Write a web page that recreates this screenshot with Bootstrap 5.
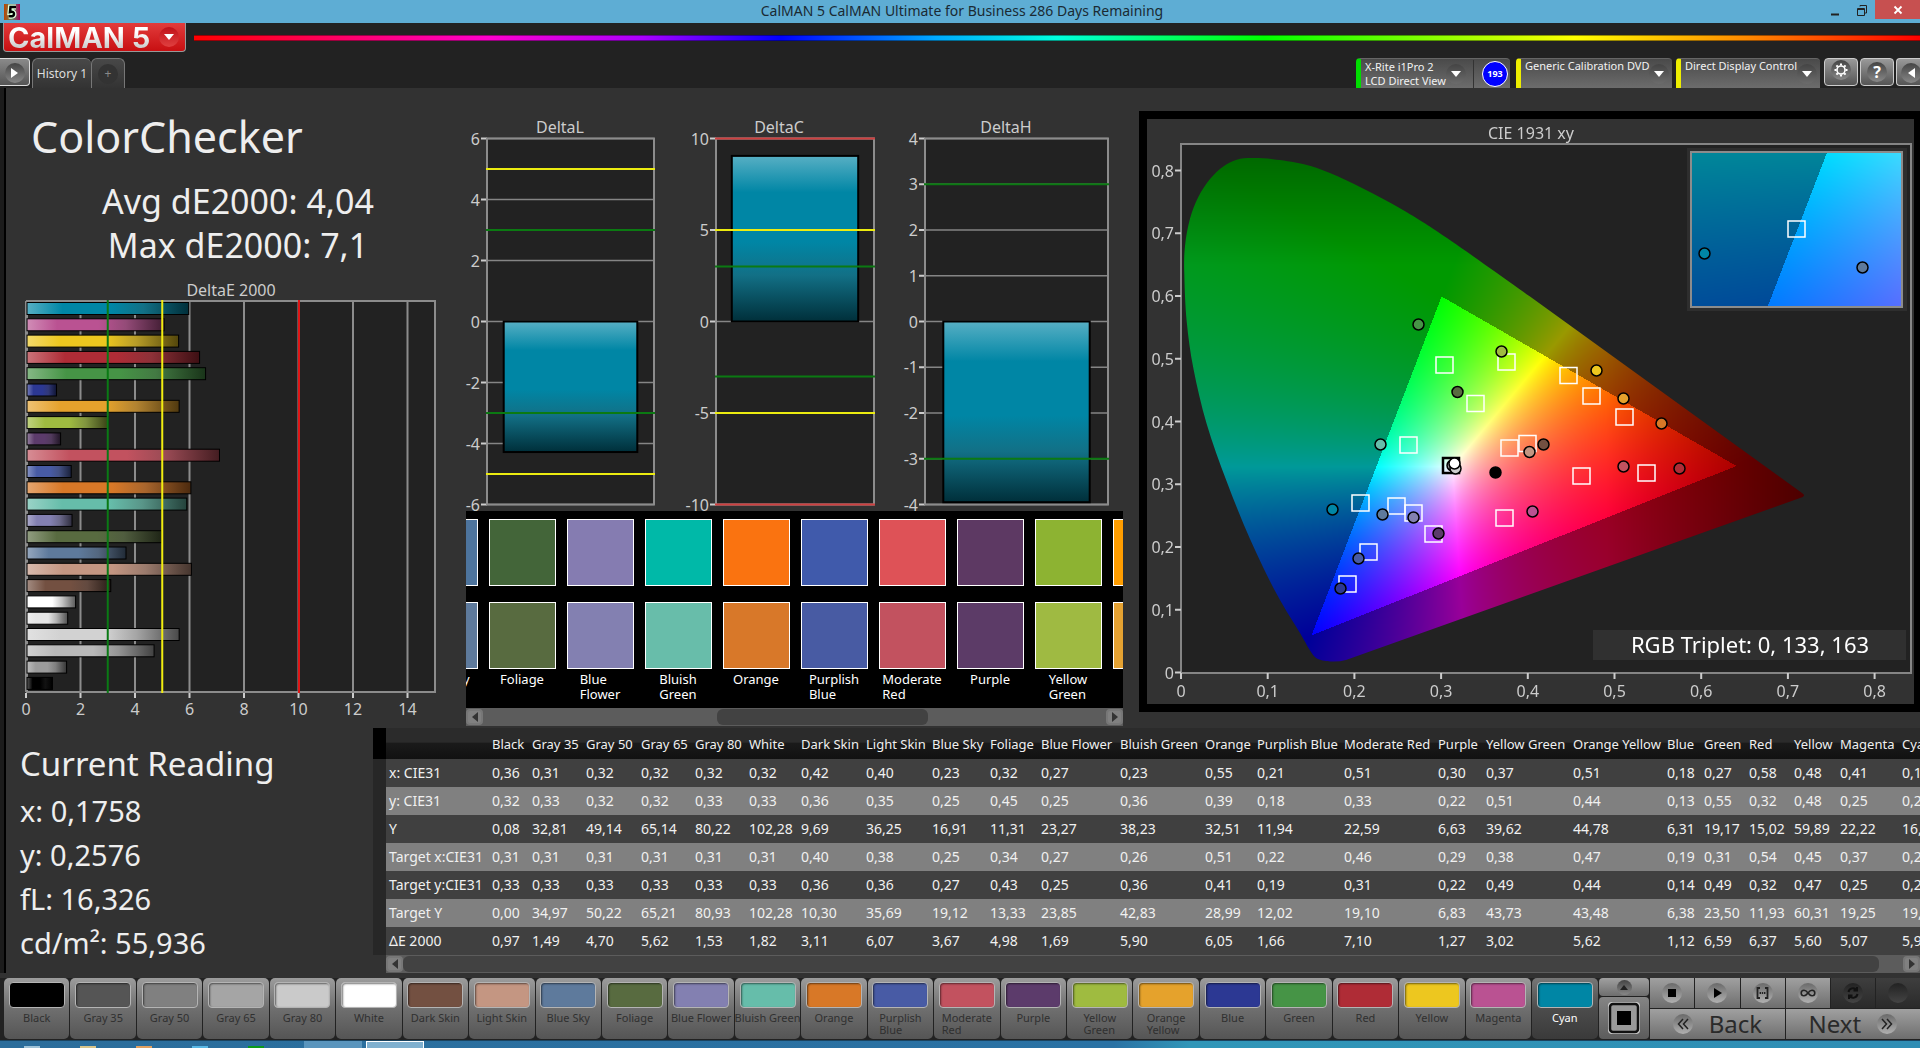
<!DOCTYPE html>
<html lang="en">
<head>
<meta charset="utf-8">
<meta name="viewport" content="width=device-width, initial-scale=1">
<title>CalMAN 5</title>
<link href="https://cdn.jsdelivr.net/npm/bootstrap@5.3.0/dist/css/bootstrap.min.css" rel="stylesheet">
<style>
body{background:#323232;color:#eee;font-family:"Noto Sans","Open Sans",sans-serif;overflow-x:hidden}
button{font-family:inherit}
.titlebar{height:23px;background:#5eadd4;color:#1a2a33;font-size:14px;line-height:22px}
.titlebar .endcap{flex:1 1 0}
.win-btn{border:0;background:none;height:19px;padding:0;width:27px}
.win-close{background:#c75050;width:45px}
.toolhead{background:#222;height:65px}
.brandbtn{height:29px;width:183px;margin-left:3px;border:1px solid #999;border-top:0;border-radius:0 0 4px 4px;background:linear-gradient(#e23c3c,#c80f12);padding:0 6px 0 4px}
.brandtext{font:700 29px/25px Inter,sans-serif;background:linear-gradient(#fff 30%,#c4c4c4);-webkit-background-clip:text;background-clip:text;color:transparent;white-space:pre}
.round-drop{width:20px;height:20px;border-radius:50%;background:linear-gradient(#c01018,#e04040)}
.rainbow{height:6px;margin-top:12px;border-top:1px solid #0006;border-bottom:1px solid #0006;background:linear-gradient(90deg,#f00 0,#f0c 17%,#a0f 26%,#00f 34%,#0af 43%,#0fd 50%,#0f0 62%,#4f0 67%,#ff0 80%,#f80 90%,#f00)}
.tabrow{height:30px}
.side-open{width:30px;height:28px;border:1px solid #ddd;border-left:0;border-radius:0 4px 4px 0;background:linear-gradient(#8a8a8a,#555)}
.tabbtn{border:1px solid #777;border-bottom:0;background:linear-gradient(#484848,#333);color:#ddd;font-size:12px;height:30px;padding:0;white-space:nowrap}
.tab-history{width:59px;border-right:0;margin-left:2px}
.tab-add{width:34px}
.srcbtn{border:0;border-top:1px solid #666;border-radius:4px 4px 0 0;background:linear-gradient(#4a4a4a,#6c6c6c);color:#f2f2f2;font-size:11px;line-height:14px;height:30px;text-align:left;padding:0 17px 0 4px;border-left:5px solid #ee0}
.srcbtn.go{border-left-color:#0d0;padding-right:2px}
.src-meter{width:154px}
.src-pattern{width:156px;margin-left:2px}
.src-display{width:144px}
.orb{width:20px;height:20px;border-radius:50%;background:linear-gradient(#444,#888);display:inline-flex;align-items:center;justify-content:center;flex:none}
.srcbtn .orb{background:linear-gradient(#444,#6c6c6c)}
.orb-drop{margin-top:5px}
.orb-flat{background:#333;color:#888}
.orb-small{width:15px;height:15px}
.count{width:26px;height:26px;border-radius:50%;background:#00f;border:1px solid #fff;font-weight:700;font-size:9px;color:#fff}
.countwrap{border-left:1px solid #333;padding-left:8px;height:28px}
.toolgroup{gap:2px}
.toolbtn{width:34px;height:28px;border:1px solid #ccc;border-radius:4px;background:linear-gradient(#999,#555);padding:0;color:#fff}
.tool-edge{width:24px;border-right:0;border-radius:4px 0 0 4px}
.workspace{border-left:4px solid #1c1c1c;box-shadow:inset 2px 0 #000}
.upper{display:grid;grid-template-columns:minmax(0,450fr) minmax(0,676fr) minmax(0,9fr) minmax(0,781fr)}
.heading{font-size:43px;line-height:58px;padding:20px 0 0 27px}
.scores{font-size:34px;line-height:44px;padding:13px 0 13px 18px}
svg text{font-family:"Noto Sans","Open Sans",sans-serif}
.axis{font-size:16px;fill:#ccc}
.chart{display:block;width:100%;height:auto}
.bench{padding-top:25px}
.swatchpanel{background:#000;margin:0 7px 0 12px}
.swatchclip{overflow:hidden;height:197px;padding-top:8px}
.swatchitem{flex:0 0 78px;font-size:13px;line-height:15px;color:#fff}
.swatchitem .chip{width:67px;height:67px;border:1px solid #fff;margin-bottom:16px}
.swatchitem .chip + .chip{margin-bottom:3px}
.strip{margin-left:-61px}
.scroller{height:18px;background:#5c5c5c}
.scroller button{width:17px;height:16px;border:2px solid #777;border-radius:4px;background:#808080;padding:0;flex:none;display:flex;align-items:center;justify-content:center}
.thumb{height:16px;border-radius:6px;background:#424242}
.ciecard{background:#323232;border:8px solid #000;border-right-width:6px;margin:23px 0 16px}
.stack{display:grid}
.stack>*{grid-area:1/1}
.reading{flex:0 0 369px;padding:11px 0 0 16px;font-size:29px;line-height:44px}
.reading h2{font-size:33px;line-height:50px;margin:0}
.reading p{margin:0}
.gridwrap{overflow:hidden;min-width:0}
.datagrid{table-layout:fixed;width:1586px;border-collapse:collapse;font-size:14px;color:#f0f0f0}
.datagrid th,.datagrid td{padding:0 0 0 3px;height:28px;font-weight:400;white-space:nowrap;line-height:20px}
.datagrid thead th{height:31px;font-size:13px}
.datagrid thead tr{background:linear-gradient(#2b2b2b 45%,#1a1a1a 50%,#111)}
.datagrid tbody tr{background:#404040}
.datagrid tbody tr:nth-child(even){background:#808080}
.datagrid td.grip{background:#272727}
.datagrid th.grip{background:#000}
.gridscroll{margin-left:13px}
.dock{margin-top:5px;background:#222;height:62px;padding-left:4px}
.patches{flex:1596 1 0;min-width:0}
.patchbtn{flex:1 1 0;min-width:0;height:61px;margin-right:1px;border:0;border-radius:5px;background:linear-gradient(#9c9c9c,#6f6f6f 50%,#555);color:#303030;font-size:11px;line-height:12px;padding:4px 0 0;display:flex;flex-direction:column;align-items:center}
.patchbtn i{width:56px;height:26px;border:1px solid #b4b4b4;border-radius:4px;box-shadow:inset 1px 1px 2px #0008;margin-bottom:4px;flex:none}
.patchbtn span{text-align:left;white-space:nowrap}
.patchbtn.current{background:linear-gradient(#777,#4c4c4c 50%,#3a3a3a);color:#fff}
.sidebtns{flex:50 1 0;gap:1px;padding:0 1px}
.sidebtns .expandbtn{height:18px}
.transport{flex:270 1 0;gap:1px}
.transport .keys{gap:1px}
.sidebtns button,.transport button{border:0;padding:0;background:linear-gradient(#a0a0a0,#6e6e6e);color:#2a2a2a;display:flex;align-items:center;justify-content:center}
.sidebtns button{border-radius:4px}
.sidebtns .patternbtn{height:42px;background:linear-gradient(#858585,#5c5c5c)}
.transport .orb{background:linear-gradient(#6a6a6a,#b0b0b0)}
.transport .smallbtn{height:30px;flex:1}
.transport .smallbtn.off{background:linear-gradient(#3e3e3e,#2a2a2a)}
.transport .off .orb{background:linear-gradient(#222,#444)}
.transport .navbtn{height:30px;flex:1;font-size:24px;line-height:28px}
.taskbar{height:9px;background:linear-gradient(90deg,#2b6d9b 0,#2a72a4 58%,#3096b8 62%,#2f8db4);border-top:1px solid #1b4460;overflow:hidden;padding-left:24px;gap:40px}
.taskbar b{width:16px;height:3px}
.taskbar .task{width:58px;height:8px;background:#5a95bd;margin-right:-36px}
.taskbar .task.active{background:#7fb0cf;border:1px solid #fff}
</style>
<script src="https://cdn.jsdelivr.net/npm/bootstrap@5.3.0/dist/js/bootstrap.bundle.min.js"></script>
</head>
<body>
<header>
  <div class="titlebar d-flex">
    <div class="endcap d-flex align-items-center ps-1">
      <svg width="16" height="16" viewBox="0 0 16 16"><defs><linearGradient id="ic"><stop stop-color="#b40"/><stop offset=".5" stop-color="#686"/><stop offset="1" stop-color="#a05"/></linearGradient></defs><rect width="16" height="16" fill="url(#ic)"/><path d="M12 3H6.500L6 8q4-1 4 2t-5 2" fill="none" stroke="#dfd" stroke-width="5"/><path d="M12 3H6.500L6 8q4-1 4 2t-5 2" fill="none" stroke="#000" stroke-width="2.500"/></svg>
    </div>
    <div class="text-center">CalMAN 5 CalMAN Ultimate for Business 286 Days Remaining</div>
    <div class="endcap d-flex justify-content-end">
      <button class="win-btn" aria-label="Minimize"><svg class="d-block mx-auto" width="10" height="16"><path d="M1 12.500h8" stroke="#222" stroke-width="2"/></svg></button>
      <button class="win-btn" aria-label="Restore"><svg class="d-block mx-auto" width="12" height="14"><path d="M1.500 5.500h7v7h-7zM1 6.500h8M4 3.500V2.500h6.500V10H9" fill="none" stroke="#222"/></svg></button>
      <button class="win-btn win-close" aria-label="Close"><svg class="d-block mx-auto" width="10" height="10"><path d="M1.500 1.500l7 7M8.500 1.500l-7 7" stroke="#fff" stroke-width="1.800"/></svg></button>
    </div>
  </div>
  <div class="toolhead d-flex flex-column justify-content-between">
    <div class="d-flex">
      <button class="brandbtn d-flex align-items-center justify-content-between" aria-label="CalMAN 5 menu"><span class="brandtext">CalMAN 5</span><span class="round-drop d-flex align-items-center justify-content-center"><svg width="10" height="6"><path d="M0 0h10L5 6z" fill="#fff"/></svg></span></button>
      <div class="rainbow flex-fill ms-2"></div>
    </div>
    <div class="tabrow d-flex">
      <button class="side-open p-0" aria-label="Open panel"><span class="orb"><svg width="7" height="10"><path d="M0 0v10l7-5z" fill="#fff"/></svg></span></button>
      <button class="tabbtn tab-history rounded-top">History 1</button>
      <button class="tabbtn tab-add rounded-top" aria-label="Add tab"><span class="orb orb-flat">+</span></button>
      <div class="ms-auto d-flex gap-1">
        <button class="srcbtn go src-meter d-flex align-items-center"><span class="text-nowrap">X-Rite i1Pro 2<br>LCD Direct View</span><span class="orb"><svg width="10" height="6"><path d="M0 0h10L5 6z" fill="#fff"/></svg></span><span class="ms-auto countwrap d-flex align-items-center"><span class="count d-flex align-items-center justify-content-center">193</span></span></button>
        <button class="srcbtn src-pattern d-flex justify-content-between"><span class="text-nowrap">Generic Calibration DVD</span><span class="orb orb-drop"><svg width="10" height="6"><path d="M0 0h10L5 6z" fill="#fff"/></svg></span></button>
        <button class="srcbtn src-display d-flex justify-content-between"><span class="text-nowrap">Direct Display Control</span><span class="orb orb-drop"><svg width="10" height="6"><path d="M0 0h10L5 6z" fill="#fff"/></svg></span></button>
        <div class="d-flex toolgroup">
        <button class="toolbtn" aria-label="Settings"><span class="orb"><svg width="16" height="16" viewBox="0 0 16 16"><circle cx="8" cy="8" r="4" fill="none" stroke="#fff" stroke-width="1.600"/><g stroke="#fff" stroke-width="2"><path d="M8 1.500v2M8 12.500v2M1.500 8h2M12.500 8h2M3.400 3.400l1.400 1.400M11.200 11.200l1.400 1.400M12.600 3.400l-1.400 1.400M4.800 11.200l-1.400 1.400"/></g></svg></span></button>
        <button class="toolbtn" aria-label="Help"><span class="orb fw-bold">?</span></button>
        <button class="toolbtn tool-edge text-start ps-1" aria-label="Collapse"><span class="orb"><svg width="7" height="10"><path d="M7 0v10L0 5z" fill="#fff"/></svg></span></button>
        </div>
      </div>
    </div>
  </div>
</header>

<main class="workspace">
  <div class="upper">
    <section>
      <h1 class="heading m-0 fw-normal">ColorChecker</h1>
      <div class="scores text-center">Avg dE2000: 4,04<br>Max dE2000: 7,1</div>
      <svg class="chart" id="deltaE" viewBox="0 0 450 440"></svg>
    </section>
    <section class="bench">
      <svg class="chart" id="deltas" viewBox="0 0 676 398"></svg>
      <div class="swatchpanel">
        <div class="swatchclip"><div class="strip d-flex" id="strip"></div></div>
        <div class="scroller d-flex align-items-center">
          <button aria-label="Scroll left"><svg width="6" height="10"><path d="M6 0v10L0 5z" fill="#333"/></svg></button>
          <div class="flex-fill d-flex"><div class="thumb" style="width:34%;margin-left:37.5%"></div></div>
          <button aria-label="Scroll right"><svg width="6" height="10"><path d="M0 0v10l6-5z" fill="#333"/></svg></button>
        </div>
      </div>
    </section>
    <div></div>
    <section class="ciecard">
      <div class="stack">
        <canvas class="chart" id="gamut" width="767" height="585"></canvas>
        <svg class="chart" id="cie" viewBox="0 0 767 585"></svg>
      </div>
    </section>
  </div>

  <div class="d-flex">
    <section class="reading">
      <h2 class="fw-normal">Current Reading</h2>
      <p>x: 0,1758</p><p>y: 0,2576</p><p>fL: 16,326</p><p>cd/m²: 55,936</p>
    </section>
    <section class="gridwrap flex-fill">
      <table class="datagrid" id="grid"></table>
      <div class="scroller gridscroll d-flex align-items-center">
        <button aria-label="Scroll left"><svg width="6" height="10"><path d="M6 0v10L0 5z" fill="#333"/></svg></button>
        <div class="flex-fill pe-4"><div class="thumb"></div></div>
        <button aria-label="Scroll right"><svg width="6" height="10"><path d="M0 0v10l6-5z" fill="#333"/></svg></button>
      </div>
    </section>
  </div>
</main>

<footer>
  <div class="dock d-flex">
    <div class="patches d-flex" id="patches"></div>
    <div class="sidebtns d-flex flex-column">
      <button class="expandbtn" aria-label="Expand"><span class="orb orb-small"><svg width="8" height="5"><path d="M0 5h8L4 0z" fill="#222"/></svg></span></button>
      <button class="patternbtn" aria-label="Pattern"><svg width="34" height="34"><rect x="1" y="1" width="32" height="32" rx="4" fill="#ccc"/><rect x="3" y="3" width="28" height="28" rx="3" fill="#999" stroke="#111" stroke-width="2.500"/><rect x="10" y="10" width="14" height="14" fill="#000"/></svg></button>
    </div>
    <div class="transport d-flex flex-column">
      <div class="d-flex keys">
        <button class="smallbtn" aria-label="Stop"><span class="orb"><svg width="8" height="8"><path d="M0 0h8v8H0z"/></svg></span></button>
        <button class="smallbtn" aria-label="Play"><span class="orb"><svg width="9" height="10"><path d="M1 0v10l8-5z"/></svg></span></button>
        <button class="smallbtn" aria-label="Read series"><span class="orb"><svg width="13" height="12" fill="none" stroke="#222" stroke-width="1.800"><path d="M4 1H1.500v10H4M9 1h2.500v10H9"/><path d="M3.600 6h6" stroke-dasharray="1.400 .8"/></svg></span></button>
        <button class="smallbtn" aria-label="Continuous"><span class="orb"><svg width="16" height="8" fill="none" stroke="#222" stroke-width="1.600"><path d="M8 4C6.500 2 5.500 1.200 4 1.200a2.800 2.800 0 0 0 0 5.600C5.500 6.800 6.500 6 8 4s2.500-2.800 4-2.800a2.800 2.800 0 0 1 0 5.600C10.500 6.800 9.500 6 8 4z"/></svg></span></button>
        <button class="smallbtn off" aria-label="Refresh"><span class="orb"><svg width="14" height="14" fill="none" stroke="#111" stroke-width="2"><path d="M2.500 6a4.500 4.500 0 0 1 8-2M11.500 8a4.500 4.500 0 0 1-8 2M11 1v3.500H7.500M3 13V9.500h3.500"/></svg></span></button>
        <button class="smallbtn off" aria-label="Record"><span class="orb"></span></button>
      </div>
      <div class="d-flex keys">
        <button class="navbtn gap-3"><span class="orb"><svg width="12" height="12" fill="none" stroke="#222" stroke-width="1.500"><path d="M6 1L1.500 6 6 11M11 1L6.500 6l4.500 5"/></svg></span>Back</button>
        <button class="navbtn gap-3">Next<span class="orb"><svg width="12" height="12" fill="none" stroke="#222" stroke-width="1.500"><path d="M1 1l4.500 5L1 11M6 1l4.500 5L6 11"/></svg></span></button>
      </div>
    </div>
  </div>
  <div class="taskbar d-flex align-items-end" id="taskbar"></div>
</footer>

<script>
// name, measured colour, then x, y, Y, target x, target y, target Y, dE 2000; column width; bar colour
const patches = [
 ['Black','#000000','0,36 0,32 0,08 0,31 0,33 0,00 0,97',40],
 ['Gray 35','#555555','0,31 0,33 32,81 0,31 0,33 34,97 1,49',54,'#9b9b9b'],
 ['Gray 50','#808080','0,32 0,32 49,14 0,31 0,33 50,22 4,70',55,'#b9b9b9'],
 ['Gray 65','#a5a5a5','0,32 0,32 65,14 0,31 0,33 65,21 5,62',54,'#d2d2d2'],
 ['Gray 80','#cacaca','0,32 0,33 80,22 0,31 0,33 80,93 1,53',54,'#e6e6e6'],
 ['White','#ffffff','0,32 0,33 102,28 0,31 0,33 102,28 1,82',52],
 ['Dark Skin','#735041','0,42 0,36 9,69 0,40 0,36 10,30 3,11',65],
 ['Light Skin','#c49682','0,40 0,35 36,25 0,38 0,36 35,69 6,07',66],
 ['Blue Sky','#5e7a9c','0,23 0,25 16,91 0,25 0,27 19,12 3,67',58],
 ['Foliage','#586b40','0,32 0,45 11,31 0,34 0,43 13,33 4,98',51],
 ['Blue Flower','#8380b1','0,27 0,25 23,27 0,27 0,25 23,85 1,69',79],
 ['Bluish Green','#66bdaa','0,23 0,36 38,23 0,26 0,36 42,83 5,90',85],
 ['Orange','#d87827','0,55 0,39 32,51 0,51 0,41 28,99 6,05',52],
 ['Purplish Blue','#485ba5','0,21 0,18 11,94 0,22 0,19 12,02 1,66',87],
 ['Moderate Red','#c2525f','0,51 0,33 22,59 0,46 0,31 19,10 7,10',94],
 ['Purple','#5c3b6b','0,30 0,22 6,63 0,29 0,22 6,83 1,27',48],
 ['Yellow Green','#9fbb40','0,37 0,51 39,62 0,38 0,49 43,73 3,02',87],
 ['Orange Yellow','#e5a22c','0,51 0,44 44,78 0,47 0,44 43,48 5,62',94],
 ['Blue','#2c3893','0,18 0,13 6,31 0,19 0,14 6,38 1,12',37],
 ['Green','#469446','0,27 0,55 19,17 0,31 0,49 23,50 6,59',45],
 ['Red','#af2c36','0,58 0,32 15,02 0,54 0,32 11,93 6,37',45],
 ['Yellow','#edc71f','0,48 0,48 59,89 0,45 0,47 60,31 5,60',46],
 ['Magenta','#ba5292','0,41 0,25 22,22 0,37 0,25 19,25 5,07',62],
 ['Cyan','#0086a5','0,18 0,26 16,32 0,20 0,27 19,62 5,97',60]];
const $ = id => document.getElementById(id);
const mix = (hex,t,k) => '#'+[1,3,5].map(i=>Math.round(parseInt(hex.substr(i,2),16)*(1-k)+t*k).toString(16).padStart(2,'0')).join('');
const grad = (id,c,v) => `<linearGradient id="${id}" ${v?'x2="0" y2="1"':''}><stop stop-color="${mix(c,255,.34)}"/><stop offset=".22" stop-color="${c}"/><stop offset=".52" stop-color="${c}"/><stop offset=".72" stop-color="${mix(c,60,.3)}"/><stop offset="1" stop-color="${mix(c,0,.65)}"/></linearGradient>`;

// dE 2000 bars
{
 let s='<text class="axis" x="227" y="16" text-anchor="middle">DeltaE 2000</text><rect x="23" y="21" width="408" height="391" fill="#222" stroke="#8c8c8c" stroke-width="2"/>';
 const X=v=>22+27.25*v;
 for(let v=0;v<=14;v+=2){s+=`<path d="M${X(v)} 21V412" stroke="#8c8c8c" stroke-width="2"/><path d="M${X(v)} 413v5" stroke="#ccc" stroke-width="2"/><text class="axis" x="${X(v)}" y="435" text-anchor="middle">${v}</text>`}
 [...patches].reverse().forEach((p,i)=>{const w=parseFloat(p[2].split(' ')[6].replace(',','.'))*27.25,y=22+i*16.3;
  s+=grad('b'+i,p[4]||p[1])+`<rect x="23" y="${y+.5}" width="${w-1}" height="12" fill="url(#b${i})" stroke="#000"/>`});
 s+=`<path d="M${X(3)} 20V413" stroke="#0a7a14" stroke-width="2"/><path d="M${X(5)} 20V413" stroke="#f2ee10" stroke-width="2"/><path d="M295 20V413" stroke="#e01616" stroke-width="2"/>`;
 $('deltaE').innerHTML=s;
}
// dL, dC, dH
{
 let s=grad('cy','#0086a5',1);
 [['DeltaL',33,200,106,6,2,-4.28,[[5,'y'],[3,'g'],[-3,'g'],[-5,'y']]],
  ['DeltaC',262,420,325,10,5,9.05,[[10,'r'],[5,'y'],[3,'g'],[-3,'g'],[-5,'y'],[-10,'r']]],
  ['DeltaH',471,654,552,4,1,-3.95,[[3,'g'],[-3,'g']]]].forEach(([t,a,b,c,m,st,v,ln])=>{
  const Y=q=>208.5-q*183/m;
  s+=`<text class="axis" x="${c}" y="20" text-anchor="middle">${t}</text><rect x="${a}" y="25" width="${b-a}" height="366" fill="#222"/>`;
  for(let q=-m;q<=m;q+=st)s+=`<path d="M${a} ${Y(q)}H${b}" stroke="#858585" stroke-width="1.500"/><path d="M${a-6} ${Y(q)}h6" stroke="#ccc" stroke-width="2"/><text class="axis" x="${a-7}" y="${Y(q)+6}" text-anchor="end">${q}</text>`;
  s+=`<rect x="${a}" y="25.500" width="${b-a}" height="366" fill="none" stroke="#8c8c8c" stroke-width="2"/>`;
  const y0=Math.min(Y(0),Y(v)),h=Math.abs(Y(v)-Y(0)),w=(b-a)*.8;
  s+=`<rect x="${(a+b-w)/2}" y="${y0}" width="${w}" height="${h}" fill="url(#cy)" stroke="#000" stroke-width="2"/>`;
  ln.forEach(([q,k])=>s+=`<path d="M${a-1} ${Y(q)}H${b+1}" stroke="${{y:'#ecec10',g:'#0b7a12',r:'#cf4040'}[k]}" stroke-width="2"/>`);
 });
 $('deltas').innerHTML=s;
}
// target over measured
$('strip').innerHTML=[['Blue Sky','#4d749d','#5e7a9c'],['Foliage','#436539','#586b40'],['Blue<br>Flower','#857cb1','#8380b1'],['Bluish<br>Green','#00b9a8','#68bdaa'],['Orange','#fa7310','#d87829'],['Purplish<br>Blue','#405aab','#485ba3'],['Moderate<br>Red','#de5257','#c2525f'],['Purple','#5d3963','#5c3b67'],['Yellow<br>Green','#8db332','#9fba42'],['Orange<br>Yellow','#ff9d00','#e5a232']]
 .map(p=>`<div class="swatchitem d-flex flex-column align-items-center"><div class="chip" style="background:${p[1]}"></div><div class="chip" style="background:${p[2]}"></div><span class="text-nowrap">${p[0]}</span></div>`).join('');
// results table
$('grid').innerHTML='<colgroup><col style="width:13px"><col style="width:103px">'+patches.map(p=>`<col style="width:${p[3]}px">`).join('')+'</colgroup><thead><tr><th class="grip"></th><th></th>'+patches.map(p=>`<th scope="col">${p[0]}</th>`).join('')+'</tr></thead><tbody>'+
 ['x: CIE31','y: CIE31','Y','Target x:CIE31','Target y:CIE31','Target Y','ΔE 2000'].map((r,i)=>`<tr><td class="grip"></td><th scope="row">${r}</th>`+patches.map(p=>`<td>${p[2].split(' ')[i]}</td>`).join('')+'</tr>').join('')+'</tbody>';
// patch buttons
$('patches').innerHTML=patches.map(p=>`<button class="patchbtn${p[0]=='Cyan'?' current':''}"><i style="background:${p[1]}"></i><span>${['Purplish Blue','Moderate Red','Yellow Green','Orange Yellow'].includes(p[0])?p[0].replace(' ','<br>'):p[0]}</span></button>`).join('');
$('taskbar').innerHTML=['#9fc3d8','#d9c58a','#e0a060','#59b8e6','#0a9a1a'].map(c=>`<b style="background:${c}"></b>`).join('')+'<b class="task"></b><b class="task active"></b>';

// chromaticity chart
const X=x=>34+867*x, Y=y=>553.5-627.5*y;
function colour(x,y){
 const a=x/y,c=(1-x-y)/y;
 let r=3.2406*a-1.5372-.4986*c,g=-.9689*a+1.8758+.0415*c,b=.0557*a-.204+1.057*c;
 const inside=r>=0&&g>=0&&b>=0;
 r=Math.max(r,0);g=Math.max(g,0);b=Math.max(b,0);
 let k=255/Math.max(r,g,b);
 if(!inside)k*=.6;
 if(x>.49)k*=Math.max(.45,1-(x-.49)*2.2);
 if(y>.65)k*=1-(y-.65)*1.85;
 return [r*k,g*k,b*k];
}
function paint(w,h,fx,fy){
 const c=document.createElement('canvas');c.width=w;c.height=h;
 const g=c.getContext('2d'),d=g.createImageData(w,h);
 for(let j=0;j<h;j++)for(let i=0;i<w;i++){const o=(j*w+i)*4,q=colour(fx(i),Math.max(.004,fy(j)));
  d.data[o]=q[0];d.data[o+1]=q[1];d.data[o+2]=q[2];d.data[o+3]=255}
 g.putImageData(d,0,0);return c;
}
{
 const g=$('gamut').getContext('2d');
 g.fillStyle='#222';g.fillRect(34,25,730,529);
 const P=[[183,542.5],[171,540],[164,533],[153,514],[129.7,475],[103,420],[79.7,362.6],[59.7,305],[46.5,250],[39.7,202.4],[37.3,155],[38,127],[43,99.6],[51.3,78],[63,60],[76.3,47.4],[89.7,40.7],[105,39.1],[126,40.2],[156,45],[183,54],[216,69.5],[256,91],[300,119],[383,177.5]];
 g.save();g.beginPath();g.moveTo(...P[0]);
 for(let i=0;i<P.length-1;i++){const a=P[i-1]||P[i],b=P[i],c=P[i+1],d=P[i+2]||c;
  g.bezierCurveTo(b[0]+(c[0]-a[0])/6,b[1]+(c[1]-a[1])/6,c[0]-(d[0]-b[0])/6,c[1]-(d[1]-b[1])/6,c[0],c[1])}
 g.lineTo(655,374);g.quadraticCurveTo(660,377,653,379);g.lineTo(199,541);g.quadraticCurveTo(192,543,183,542.5);
 g.clip();g.drawImage(paint(767,585,i=>(i-34)/867,j=>(553.5-j)/627.5),0,0);g.restore();
 g.fillStyle='#2e2e2e';g.fillRect(540,29,220,163);
 g.drawImage(paint(213,157,i=>.2087+(i-106.5)/2820,j=>.2715-(j-78.5)/2035),543,32);
 let s='<text class="axis" x="384" y="20" text-anchor="middle">CIE 1931 xy</text><rect x="34" y="25" width="730" height="529" fill="none" stroke="#858585" stroke-width="2"/>';
 for(let v=0;v<9;v++){const t=v?'0,'+v:'0';
  s+=`<path d="M${X(v/10)} 554v6M28 ${Y(v/10)}h6" stroke="#ccc" stroke-width="2"/><text class="axis" x="${X(v/10)}" y="578" text-anchor="middle">${t}</text><text class="axis" x="27" y="${Y(v/10)+6}" text-anchor="end">${t}</text>`}
 const box=(x,y,c='#fff')=>`<rect x="${x-8}" y="${y-7}" width="17" height="16" fill="none" stroke="${c}" stroke-width="1.500"/>`;
 const dot=(x,y,c)=>`<circle cx="${x+.5}" cy="${y+.5}" r="5.500" fill="${c}" stroke="#000" stroke-width="1.500"/>`;
 [[297,245],[359,242],[328,283.5],[261,325],[362,328],[380,323.5],[213,383],[249,386],[266,393],[286,414],[221,432],[200,464],[357,398],[421,255.5],[444,276],[477,297],[434,356],[499,353]].forEach(q=>s+=box(...q));
 s+='<rect x="296" y="339" width="16" height="15" fill="none" stroke="#000" stroke-width="2.500"/>';
 [[271,205,'#469446'],[354,232,'#9fbb40'],[310,272.5,'#586b40'],[233,325,'#66bdaa'],[185,390,'#0086a5'],[235,395,'#5e7a9c'],[266,398,'#8380b1'],[291,414,'#5c3b6b'],[211,439,'#485ba5'],[193,469,'#2c3893'],[305,346,'#999'],[308,349,'#ccc'],[307,344,'#fff'],[348,353,'#000'],[382,332.5,'#c49682'],[396,325,'#735041'],[449,251,'#edc71f'],[476,279,'#e5a22c'],[514,304,'#d87827'],[476,347,'#c2525f'],[532,349,'#af2c36'],[385,392,'#ba5292']].forEach(q=>s+=dot(...q));
 s+='<rect x="544" y="33" width="211" height="155" fill="none" stroke="#8c8c8c" stroke-width="2"/>'+box(649,109)+dot(557,134,'#0086a5')+dot(715,148,'#5e7a9c');
 s+='<rect x="446" y="511" width="313" height="30" fill="#303030"/><text x="603" y="534" text-anchor="middle" font-size="22" fill="#fff">RGB Triplet: 0, 133, 163</text>';
 $('cie').innerHTML=s;
}
</script>
</body>
</html>
